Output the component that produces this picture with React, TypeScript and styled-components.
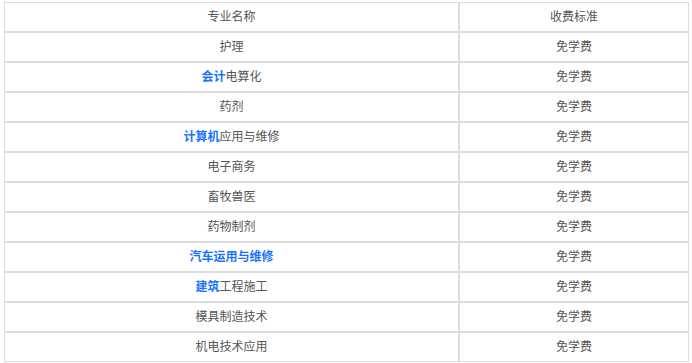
import React from "react";
import styled, { createGlobalStyle } from "styled-components";

const Global = createGlobalStyle`
  body {
    margin: 0;
    background: #fff;
    font-family: "Microsoft YaHei", "Noto Sans CJK SC", "Noto Sans", sans-serif;
  }
`;

const Wrap = styled.div`
  padding: 2px 0 0 4px;
`;

const Table = styled.table`
  width: 685px;
  border-collapse: separate;
  border-spacing: 0;
  table-layout: fixed;
  font-size: 12px;
  color: #555;
`;

const Cell = styled.td<{ $w?: number }>`
  border: 1px solid #dddddd;
  height: 25px;
  padding: 0 0 3px;
  text-align: center;
  vertical-align: middle;
  line-height: 25px;
  ${(p) => (p.$w ? `width: ${p.$w}px;` : "")}
`;

const Hi = styled.strong`
  color: #1a73ff;
  font-weight: bold;
`;

type Row = { hi?: string; rest: string };

const rows: Row[] = [
  { rest: "护理" },
  { hi: "会计", rest: "电算化" },
  { rest: "药剂" },
  { hi: "计算机", rest: "应用与维修" },
  { rest: "电子商务" },
  { rest: "畜牧兽医" },
  { rest: "药物制剂" },
  { hi: "汽车运用与维修", rest: "" },
  { hi: "建筑", rest: "工程施工" },
  { rest: "模具制造技术" },
  { rest: "机电技术应用" },
];

export default function App() {
  return (
    <>
      <Global />
      <Wrap>
        <Table>
          <tbody>
            <tr>
              <Cell $w={453}>专业名称</Cell>
              <Cell>收费标准</Cell>
            </tr>
            {rows.map((r, i) => (
              <tr key={i}>
                <Cell>
                  {r.hi && <Hi>{r.hi}</Hi>}
                  {r.rest}
                </Cell>
                <Cell>免学费</Cell>
              </tr>
            ))}
          </tbody>
        </Table>
      </Wrap>
    </>
  );
}
